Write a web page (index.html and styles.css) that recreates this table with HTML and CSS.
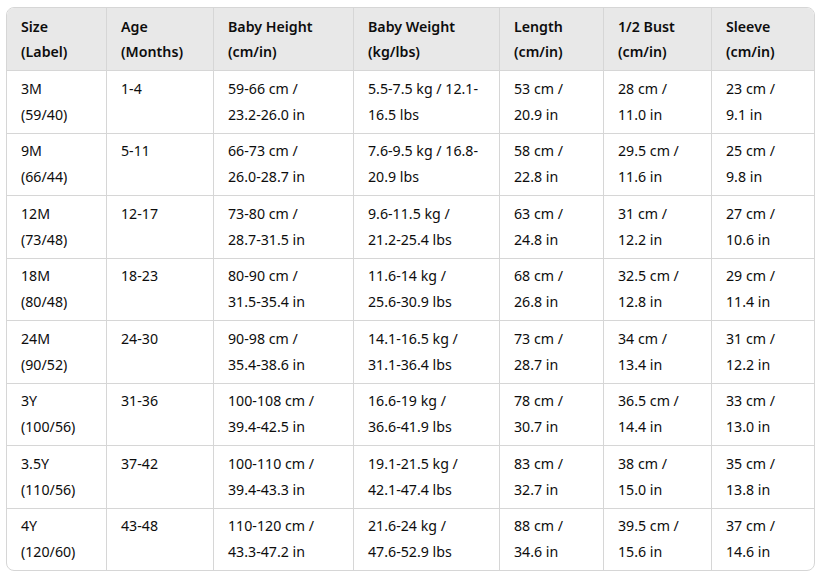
FILE: index.html
```html
<!DOCTYPE html>
<html lang="en">
<head>
<meta charset="utf-8">
<title>Size Chart</title>
<link rel="stylesheet" href="styles.css">
</head>
<body>
<div class="table-wrap">
  <table class="size-table">
    <colgroup>
      <col class="c1"><col class="c2"><col class="c3"><col class="c4"><col class="c5"><col class="c6"><col class="c7">
    </colgroup>
    <thead>
      <tr>
        <th>Size<br>(Label)</th>
        <th>Age<br>(Months)</th>
        <th>Baby Height<br>(cm/in)</th>
        <th>Baby Weight<br>(kg/lbs)</th>
        <th>Length<br>(cm/in)</th>
        <th>1/2 Bust<br>(cm/in)</th>
        <th>Sleeve<br>(cm/in)</th>
      </tr>
    </thead>
    <tbody>
      <tr><td>3M<br>(59/40)</td><td>1-4</td><td>59-66 cm /<br>23.2-26.0 in</td><td>5.5-7.5 kg / 12.1-<br>16.5 lbs</td><td>53 cm /<br>20.9 in</td><td>28 cm /<br>11.0 in</td><td>23 cm /<br>9.1 in</td></tr>
      <tr><td>9M<br>(66/44)</td><td>5-11</td><td>66-73 cm /<br>26.0-28.7 in</td><td>7.6-9.5 kg / 16.8-<br>20.9 lbs</td><td>58 cm /<br>22.8 in</td><td>29.5 cm /<br>11.6 in</td><td>25 cm /<br>9.8 in</td></tr>
      <tr><td>12M<br>(73/48)</td><td>12-17</td><td>73-80 cm /<br>28.7-31.5 in</td><td>9.6-11.5 kg /<br>21.2-25.4 lbs</td><td>63 cm /<br>24.8 in</td><td>31 cm /<br>12.2 in</td><td>27 cm /<br>10.6 in</td></tr>
      <tr><td>18M<br>(80/48)</td><td>18-23</td><td>80-90 cm /<br>31.5-35.4 in</td><td>11.6-14 kg /<br>25.6-30.9 lbs</td><td>68 cm /<br>26.8 in</td><td>32.5 cm /<br>12.8 in</td><td>29 cm /<br>11.4 in</td></tr>
      <tr><td>24M<br>(90/52)</td><td>24-30</td><td>90-98 cm /<br>35.4-38.6 in</td><td>14.1-16.5 kg /<br>31.1-36.4 lbs</td><td>73 cm /<br>28.7 in</td><td>34 cm /<br>13.4 in</td><td>31 cm /<br>12.2 in</td></tr>
      <tr><td>3Y<br>(100/56)</td><td>31-36</td><td>100-108 cm /<br>39.4-42.5 in</td><td>16.6-19 kg /<br>36.6-41.9 lbs</td><td>78 cm /<br>30.7 in</td><td>36.5 cm /<br>14.4 in</td><td>33 cm /<br>13.0 in</td></tr>
      <tr><td>3.5Y<br>(110/56)</td><td>37-42</td><td>100-110 cm /<br>39.4-43.3 in</td><td>19.1-21.5 kg /<br>42.1-47.4 lbs</td><td>83 cm /<br>32.7 in</td><td>38 cm /<br>15.0 in</td><td>35 cm /<br>13.8 in</td></tr>
      <tr><td>4Y<br>(120/60)</td><td>43-48</td><td>110-120 cm /<br>43.3-47.2 in</td><td>21.6-24 kg /<br>47.6-52.9 lbs</td><td>88 cm /<br>34.6 in</td><td>39.5 cm /<br>15.6 in</td><td>37 cm /<br>14.6 in</td></tr>
    </tbody>
  </table>
</div>
</body>
</html>
```
FILE: styles.css
```css
html, body {
  background: #ffffff;
}
body {
  margin: 7px 0 0 6px;
  font-family: "Noto Sans", "Open Sans", "DejaVu Sans", sans-serif;
  font-size: 14.2px;
  color: #0d0d0d;
}
.table-wrap {
  width: 809px;
  box-sizing: border-box;
  border: 1px solid #d6d6d6;
  border-radius: 8px;
  overflow: hidden;
}
.size-table {
  width: 807px;
  table-layout: fixed;
  border-collapse: separate;
  border-spacing: 0;
}
.c1 { width: 100px; }
.c2 { width: 107px; }
.c3 { width: 140px; }
.c4 { width: 146px; }
.c5 { width: 104px; }
.c6 { width: 108px; }
.c7 { width: 102px; }
.size-table th,
.size-table td {
  box-sizing: border-box;
  text-align: left;
  vertical-align: top;
  padding: 4.75px 13px 4.75px 14px;
  line-height: 26px;
  white-space: nowrap;
  border-right: 1px solid #d6d6d6;
  border-bottom: 1px solid #d6d6d6;
}
.size-table th:last-child,
.size-table td:last-child {
  border-right: none;
}
.size-table tbody tr:last-child td {
  border-bottom: none;
}
.size-table th {
  background: #e8e8e8;
  font-weight: 600;
  line-height: 25px;
  padding-top: 6px;
  padding-bottom: 6px;
}
```
